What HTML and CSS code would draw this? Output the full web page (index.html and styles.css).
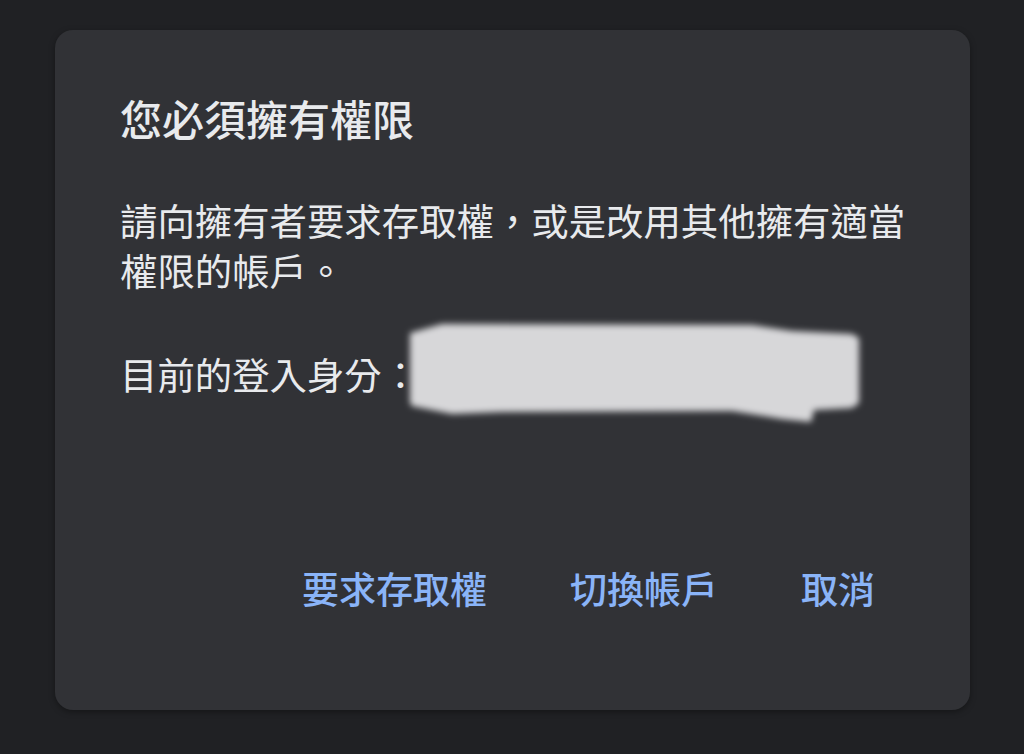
FILE: index.html
```html
<!DOCTYPE html>
<html lang="zh-Hant">
  <head>
    <meta charset="utf-8">
    <title>您必須擁有權限</title>
    <link rel="stylesheet" href="styles.css">
  </head>
  <body>

    <div class="dialog">
      <h1 class="dialog_title">您必須擁有權限</h1>

      <p class="dialog_text">請向擁有者要求存取權，或是改用其他擁有適當權限的帳戶。</p>

      <div class="identity">
        <span>目前的登入身分：</span>
        <svg class="scribble" width="465" height="115" viewBox="0 0 465 115">
          <defs>
            <filter id="soft" x="-5%" y="-20%" width="110%" height="140%">
              <feGaussianBlur stdDeviation="3"/>
            </filter>
          </defs>
          <polygon filter="url(#soft)" fill="#d7d7d9"
            points="8,17 40,8 350,9 390,15 450,18 457,22 457,87 450,92 412,94 409,106 380,103 330,95 100,96 50,98 40,96 10,90 8,87"/>
        </svg>
      </div>

      <div class="actions">
        <button class="text_button">要求存取權</button>
        <button class="text_button">切換帳戶</button>
        <button class="text_button">取消</button>
      </div>
    </div>

  </body>
</html>
```

FILE: styles.css
```css
    html, body{
      margin: 0;
      background-color: #202124;
    }

    body{
      width: 1024px;
      height: 754px;
      padding: 30px 0 0 55px;
      box-sizing: border-box;
      overflow: hidden;
      font-family: "Noto Sans CJK TC", "Noto Sans", sans-serif;
      color: #e8eaed;
    }

    .dialog{
      width: 915px;
      height: 680px;
      box-sizing: border-box;
      padding: 63px 63px 97px 65px;
      background-color: #313236;
      border-radius: 18px;
      box-shadow: 0 2px 6px rgba(0,0,0,0.35);
      display: flex;
      flex-direction: column;
    }

    .dialog_title{
      margin: 0;
      font-size: 42px;
      line-height: 50px;
      font-weight: 500;
    }

    .dialog_text{
      margin: 52px 0 0 0;
      font-size: 37.4px;
      line-height: 50px;
      font-weight: 400;
    }

    .identity{
      margin-top: 54px;
      height: 50px;
      display: flex;
      align-items: center;
      font-size: 37.4px;
      line-height: 50px;
    }

    .scribble{
      flex: none;
      margin: -33px 0 -32px -17px;
    }

    .actions{
      margin-top: auto;
      padding-right: 32px;
      display: flex;
      justify-content: flex-end;
      gap: 83px;
    }

    .text_button{
      background: none;
      border: none;
      padding: 0;
      margin: 0;
      font-family: "Noto Sans CJK TC", "Noto Sans", sans-serif;
      font-size: 37px;
      line-height: 50px;
      font-weight: 500;
      color: #8ab4f8;
      cursor: pointer;
    }
```
